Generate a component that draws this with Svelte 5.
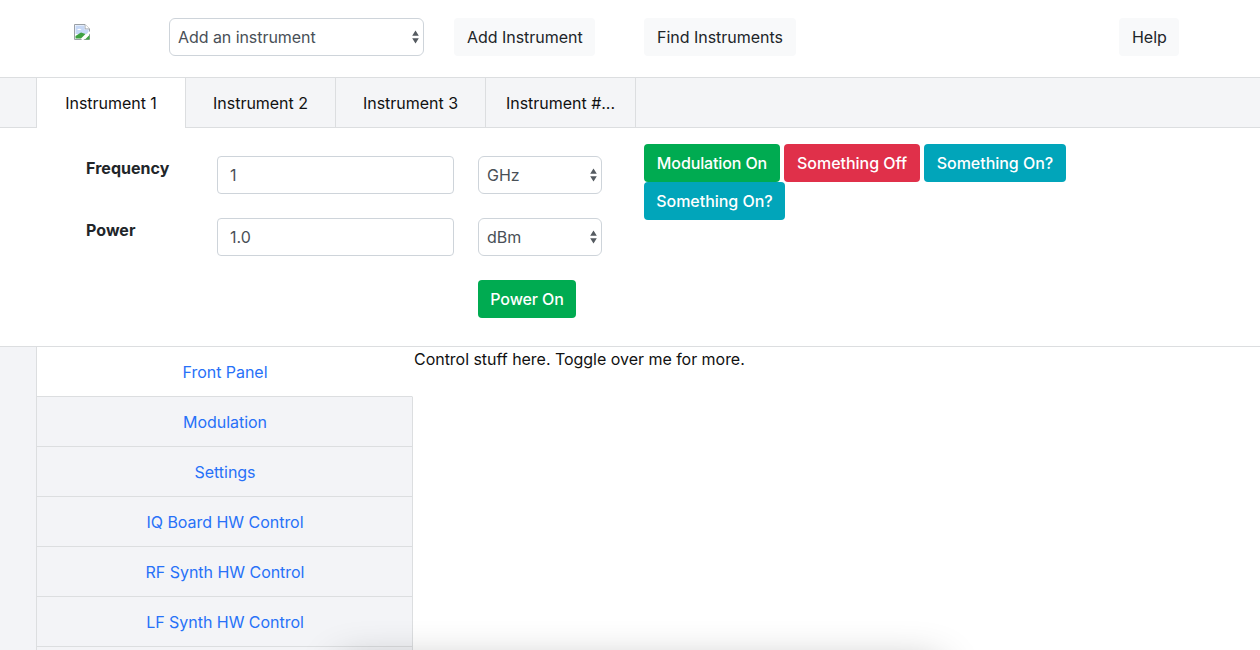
<script>
  const tabs = ['Instrument 1', 'Instrument 2', 'Instrument 3', 'Instrument #...'];
  const nav = ['Front Panel', 'Modulation', 'Settings', 'IQ Board HW Control', 'RF Synth HW Control', 'LF Synth HW Control', ''];
</script>

{#snippet sel(cls, text)}
  <div class="sel {cls}">
    <select><option>{text}</option></select>
    <svg class="arrows" width="7" height="14" viewBox="0 0 7 14"><path d="M3.5 0.5 L6.8 5.8 H0.2 Z M3.5 13.5 L6.8 8.2 H0.2 Z" fill="#555b61"/></svg>
  </div>
{/snippet}

<div class="page">
  <header>
    <svg class="broken" width="16" height="16" viewBox="0 0 16 16">
      <path d="M0.5 0.5 H11 L15.5 5 V15.5 H0.5 Z" fill="#fff" stroke="#9aa0a6"/>
      <path d="M11 0.5 V5 H15.5" fill="#fff" stroke="#9aa0a6"/>
      <path d="M1.5 1.5 H10.5 V5.5 H14.5 V10 H1.5 Z" fill="#c6d8f6"/>
      <path d="M3 6 Q5 3.4 7.5 6 Z" fill="#fff"/>
      <path d="M1.5 14.5 V12 L7 8.5 L11.5 10 L7 14.5 Z" fill="#3fa243"/>
      <path d="M11 15.5 L15.5 11 V15.5 Z" fill="#3fa243"/>
      <path d="M8 16 L16 8" stroke="#fff" stroke-width="2"/>
    </svg>
    {@render sel('top', 'Add an instrument')}
    <button class="btn light add">Add Instrument</button>
    <button class="btn light find">Find Instruments</button>
    <button class="btn light help">Help</button>
  </header>

  <nav class="tabs">
    {#each tabs as t, i}
      <div class="tab" class:active={i === 0}>{t}</div>
    {/each}
  </nav>

  <section class="panel">
    <div class="form">
      <div class="label">Frequency</div>
      <input value="1" />
      {@render sel('unit', 'GHz')}
      <div class="label">Power</div>
      <input value="1.0" />
      {@render sel('unit', 'dBm')}
      <button class="btn green power">Power On</button>
    </div>
    <div class="toggles">
      <button class="btn green">Modulation On</button>
      <button class="btn red">Something Off</button>
      <button class="btn teal">Something On?</button>
      <button class="btn teal">Something On?</button>
    </div>
  </section>

  <main>
    <aside>
      {#each nav as n, i}
        <div class="item" class:active={i === 0}>{n}</div>
      {/each}
    </aside>
    <div class="content">Control stuff here. Toggle over me for more.</div>
  </main>
  <div class="shade"></div>
</div>

<style>
  :global(body) {
    margin: 0;
    background: #fff;
  }
  .page {
    position: relative;
    height: 650px;
    overflow: hidden;
    font-family: Inter, "Liberation Sans", sans-serif;
    font-size: 16px;
    line-height: 24px;
    letter-spacing: -0.03px;
    color: #212529;
  }
  header {
    display: flex;
    align-items: center;
    height: 77px;
    padding-left: 74px;
    padding-bottom: 3px;
    box-sizing: border-box;
  }
  .broken {
    align-self: flex-start;
    margin-top: 24px;
    margin-right: 79px;
  }
  .sel {
    position: relative;
    height: 38px;
    box-sizing: border-box;
  }
  .sel select {
    appearance: none;
    display: block;
    width: 100%;
    height: 38px;
    box-sizing: border-box;
    margin: 0;
    padding: 0 8px;
    border: 1px solid #ced4da;
    border-radius: 6px;
    background: #fff;
    color: #495057;
    font: inherit;
    letter-spacing: -0.06px;
  }
  .arrows {
    position: absolute;
    right: 5px;
    top: 12px;
    pointer-events: none;
  }
  .top { width: 255px; }
  .unit { width: 124px; }
  .btn {
    height: 38px;
    box-sizing: border-box;
    border: 0;
    border-radius: 4px;
    padding: 0 13px;
    font: inherit;
    letter-spacing: inherit;
    white-space: nowrap;
  }
  .light { background: #f8f9fa; color: #212529; }
  .green { background: #00ab51; color: #fff; font-weight: 500; letter-spacing: -0.12px; }
  .red { background: #e0304a; color: #fff; font-weight: 500; }
  .teal { background: #01a5ba; color: #fff; font-weight: 500; }
  .add { margin-left: 30px; width: 141px; }
  .find { margin-left: 49px; width: 152px; }
  .help { margin-left: auto; margin-right: 81px; width: 60px; }

  .tabs {
    display: flex;
    height: 51px;
    box-sizing: border-box;
    padding-left: 36px;
    background: #f4f5f7;
    border-top: 1px solid #dcdee0;
    border-bottom: 1px solid #dcdee0;
  }
  .tab {
    width: 150px;
    box-sizing: border-box;
    border-right: 1px solid #dcdee0;
    text-align: center;
    line-height: 50px;
    color: #111;
  }
  .tab.active {
    background: #fff;
    height: 50px;
    border-left: 1px solid #dcdee0;
  }

  .panel {
    display: flex;
    align-items: flex-start;
    height: 219px;
    box-sizing: border-box;
    padding-left: 86px;
    border-bottom: 1px solid #dcdee0;
  }
  .form {
    display: grid;
    grid-template-columns: 131px 237px 148px;
    grid-template-rows: 38px 38px 38px;
    row-gap: 24px;
    padding-top: 28px;
    width: 516px;
    flex: none;
  }
  .form .sel { margin-left: 24px; grid-column: 3; }
  .label { font-weight: 700; letter-spacing: 0.05px; color: #212529; }
  input {
    height: 38px;
    width: 237px;
    box-sizing: border-box;
    margin: 0;
    padding: 0 12px;
    border: 1px solid #ced4da;
    border-radius: 4px;
    color: #495057;
    font: inherit;
    outline: none;
  }
  .power { grid-column: 3; margin-left: 24px; width: 98px; padding: 0; }
  .toggles {
    display: flex;
    flex-wrap: wrap;
    gap: 0 4px;
    width: 430px;
    margin-left: 42px;
    padding-top: 16px;
  }
  .toggles .btn { padding: 0; }
  .toggles .green { width: 136px; }
  .toggles .red { width: 136px; }
  .toggles .teal { width: 142px; }
  .toggles .teal:last-child { width: 141px; }

  main {
    display: flex;
    align-items: flex-start;
  }
  aside {
    width: 414px;
    flex: none;
    box-sizing: border-box;
    padding-left: 36px;
    background: linear-gradient(#f3f4f7, #f3f4f7) left / 36px 100% no-repeat;
  }
  .item {
    height: 50px;
    width: 377px;
    box-sizing: border-box;
    padding-left: 1px;
    border-left: 1px solid #dcdee0;
    border-right: 1px solid #dcdee0;
    border-bottom: 1px solid #dcdee0;
    background: #f3f4f7;
    color: #2771f8;
    text-align: center;
    line-height: 51px;
  }
  .item.active {
    background: #fff;
    border-right-color: #fff;
  }
  .content { color: #111; }
  .shade {
    position: absolute;
    left: 340px;
    width: 600px;
    top: 664px;
    height: 40px;
    box-shadow: 0 0 42px rgba(0, 0, 0, 0.3);
    pointer-events: none;
  }
</style>
